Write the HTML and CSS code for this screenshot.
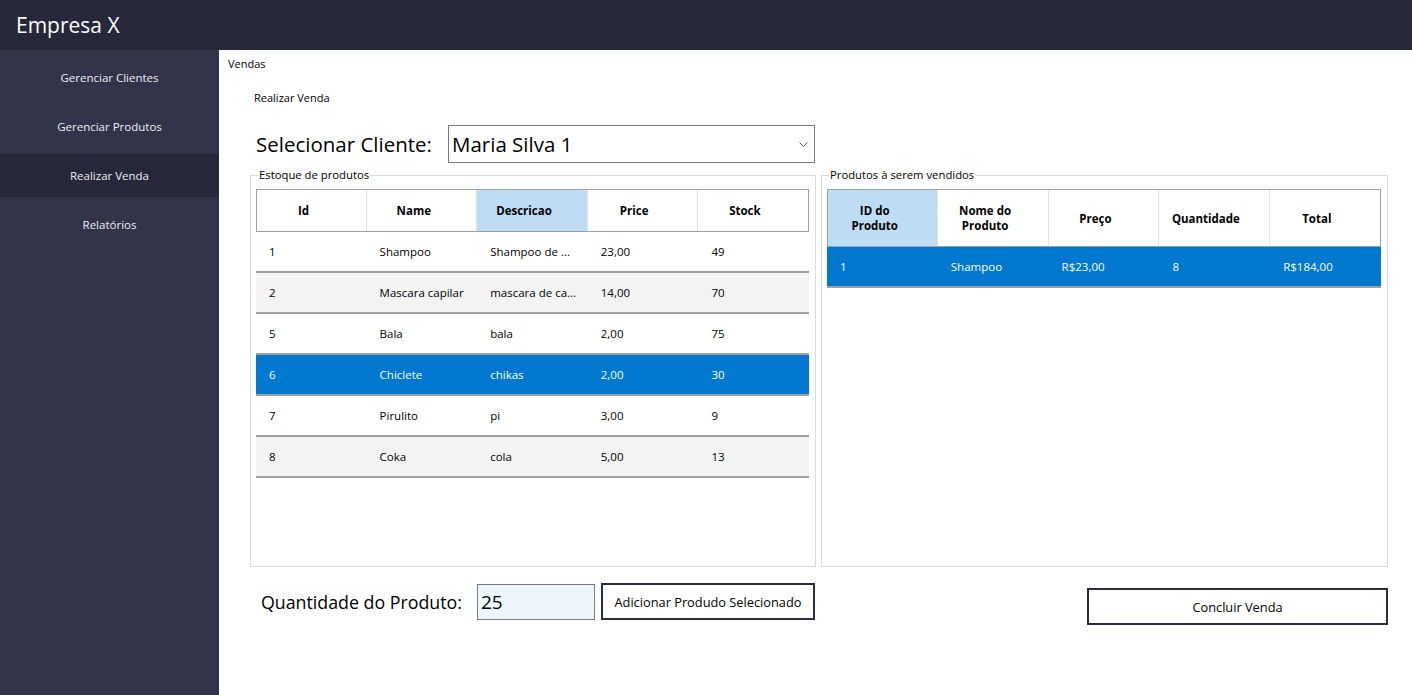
FILE: index.html
```html
<!DOCTYPE html>
<html lang="pt-BR">
<head>
<meta charset="utf-8">
<title>Empresa X - Vendas</title>
<link rel="stylesheet" href="styles.css">
</head>
<body>
<div class="app">
  <header class="topbar">Empresa X</header>
  <div class="body">
    <nav class="sidebar">
      <div class="nav-item">Gerenciar Clientes</div>
      <div class="nav-item">Gerenciar Produtos</div>
      <div class="nav-item active">Realizar Venda</div>
      <div class="nav-item">Relatórios</div>
    </nav>
    <main class="main">
      <div class="page-title">Vendas</div>
      <div class="subtitle">Realizar Venda</div>
      <div class="client-row">
        <span class="client-label">Selecionar Cliente:</span>
        <div class="combo">
          <span class="combo-text">Maria Silva 1</span>
          <svg class="chevron" width="9" height="5" viewBox="0 0 9 5"><path d="M0.5 0.5 L4.5 4.5 L8.5 0.5" fill="none" stroke="#606060" stroke-width="1"/></svg>
        </div>
      </div>
      <div class="groups">
        <fieldset class="group group-left">
          <legend>Estoque de produtos</legend>
          <div class="grid">
            <div class="grid-head">
              <div class="hcell">Id</div>
              <div class="hcell">Name</div>
              <div class="hcell hl">Descricao</div>
              <div class="hcell">Price</div>
              <div class="hcell">Stock</div>
            </div>
            <div class="grid-row"><div class="cell">1</div><div class="cell">Shampoo</div><div class="cell">Shampoo de ...</div><div class="cell">23,00</div><div class="cell">49</div></div>
            <div class="grid-row alt"><div class="cell">2</div><div class="cell">Mascara capilar</div><div class="cell">mascara de ca...</div><div class="cell">14,00</div><div class="cell">70</div></div>
            <div class="grid-row"><div class="cell">5</div><div class="cell">Bala</div><div class="cell">bala</div><div class="cell">2,00</div><div class="cell">75</div></div>
            <div class="grid-row sel"><div class="cell">6</div><div class="cell">Chiclete</div><div class="cell">chikas</div><div class="cell">2,00</div><div class="cell">30</div></div>
            <div class="grid-row"><div class="cell">7</div><div class="cell">Pirulito</div><div class="cell">pi</div><div class="cell">3,00</div><div class="cell">9</div></div>
            <div class="grid-row alt"><div class="cell">8</div><div class="cell">Coka</div><div class="cell">cola</div><div class="cell">5,00</div><div class="cell">13</div></div>
          </div>
        </fieldset>
        <fieldset class="group group-right">
          <legend>Produtos à serem vendidos</legend>
          <div class="grid">
            <div class="grid-head tall">
              <div class="hcell hl">ID do<br>Produto</div>
              <div class="hcell">Nome do<br>Produto</div>
              <div class="hcell">Preço</div>
              <div class="hcell">Quantidade</div>
              <div class="hcell">Total</div>
            </div>
            <div class="grid-row sel"><div class="cell">1</div><div class="cell">Shampoo</div><div class="cell">R$23,00</div><div class="cell">8</div><div class="cell">R$184,00</div></div>
          </div>
        </fieldset>
      </div>
      <div class="bottom">
        <div class="qty">
          <span class="qty-label">Quantidade do Produto:</span>
          <div class="qty-input">25</div>
          <button class="btn btn-add">Adicionar Produdo Selecionado</button>
        </div>
        <button class="btn btn-finish">Concluir Venda</button>
      </div>
    </main>
  </div>
</div>
</body>
</html>
```

FILE: styles.css
```css
* { box-sizing: border-box; }
html, body { margin: 0; padding: 0; }
body {
  font-family: "Open Sans", "Noto Sans", sans-serif;
  font-size: 12px;
  color: #000;
  background: #fff;
  width: 1412px;
  height: 695px;
  overflow: hidden;
}
.app { display: flex; flex-direction: column; height: 695px; }
.topbar {
  height: 50px;
  background: #272839;
  color: #fff;
  font-size: 21px;
  line-height: 50px;
  padding-left: 16px;
  flex: none;
}
.body { display: flex; flex: 1; }
.sidebar {
  width: 219px;
  flex: none;
  background: #33334a;
  padding-top: 6px;
  display: flex;
  flex-direction: column;
  gap: 6px;
}
.nav-item {
  height: 43px;
  display: flex;
  align-items: center;
  justify-content: center;
  color: #eeeef2;
  font-size: 11.5px;
}
.nav-item.active { background: #272839; }
.main {
  flex: 1;
  padding: 6px 24px 0 9px;
}
.page-title { font-size: 11px; line-height: 16px; }
.subtitle { font-size: 11px; line-height: 16px; margin: 18px 0 0 26px; }
.client-row {
  display: flex;
  align-items: center;
  margin: 19px 0 0 28px;
}
.client-label { font-size: 20.5px; width: 192px; white-space: nowrap; }
.combo {
  width: 367px;
  height: 38px;
  border: 1px solid #7a7a7a;
  display: flex;
  align-items: center;
  padding: 0 4px 0 3px;
}
.combo-text { font-size: 20.5px; flex: 1; }
.chevron { margin-right: 2px; }
.groups {
  display: flex;
  gap: 5px;
  margin: 4px 0 0 22px;
}
.group {
  margin: 0;
  border: 1px solid #dcdcdc;
  padding: 6px 6px 0 5px;
  height: 400px;
  min-width: 0;
}
.group legend {
  font-size: 11.3px;
  line-height: 16px;
  padding: 0 1px;
  margin-left: 2px;
}
.group-left { width: 566px; flex: none; }
.group-right { flex: 1; }
.grid { display: flex; flex-direction: column; }
.grid-head {
  display: grid;
  grid-template-columns: repeat(5, 1fr);
  height: 43px;
  border: 1px solid #a0a0a0;
}
.grid-head.tall { height: 58px; }
.hcell {
  display: flex;
  align-items: center;
  justify-content: center;
  text-align: center;
  font-weight: 700;
  font-size: 11.5px;
  line-height: 15px;
  padding-right: 16px;
  border-right: 1px solid #e3e3e3;
}
.hcell:last-child { border-right: none; }
.hcell.hl { background: #bedcf3; }
.grid-row {
  display: grid;
  grid-template-columns: repeat(5, 1fr);
  height: 41px;
  border-bottom: 2px solid #a0a0a0;
  background: #fff;
}
.grid-row.alt { background: #f3f3f3; }
.grid-row.sel { background: #0078cf; color: #fff; }
.cell {
  display: flex;
  align-items: center;
  padding-left: 13px;
  font-size: 11.5px;
  white-space: nowrap;
  overflow: hidden;
}
.bottom {
  display: flex;
  align-items: flex-start;
  margin-top: 16px;
}
.qty {
  display: flex;
  align-items: center;
  margin-left: 33px;
}
.qty-label { font-size: 17.8px; width: 216px; white-space: nowrap; }
.qty-input {
  width: 118px;
  height: 36px;
  border: 1px solid #7a7a7a;
  background: #edf5fd;
  font-size: 19px;
  display: flex;
  align-items: center;
  padding-left: 3px;
  margin-top: 1px;
}
.btn {
  font-family: inherit;
  background: #fff;
  border: 2px solid #2d2d42;
  color: #000;
  padding: 0;
  margin: 0;
  font-size: 12.8px;
}
.btn-add { width: 214px; height: 37px; margin-left: 6px; }
.btn-finish { width: 301px; height: 37px; margin-left: auto; margin-top: 5px; }
```
